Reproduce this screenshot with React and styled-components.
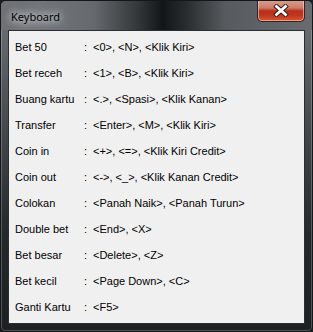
import React from "react";
import styled, { createGlobalStyle } from "styled-components";

const Global = createGlobalStyle`
  html, body { margin: 0; padding: 0; background: #1b1e20; }
  #root { width: 313px; height: 332px; }
`;

const Window = styled.div`
  box-sizing: border-box;
  width: 313px;
  height: 332px;
  border: 1px solid #14171a;
  border-radius: 6px 6px 5px 5px;
  background: linear-gradient(180deg, #72767a 0%, #5c6064 18%, #3e4245 45%, #25292b 70%, #1d2022 100%);
  box-shadow: inset 0 0 0 1px rgba(255, 255, 255, 0.22);
  display: flex;
  flex-direction: column;
  overflow: hidden;
`;

const TitleBar = styled.div`
  height: 29px;
  display: flex;
  align-items: flex-start;
  padding-left: 10px;
  background: linear-gradient(
    90deg,
    #6e7276 0%,
    #74787c 12%,
    #65696d 30%,
    #33373a 44%,
    #131618 52%,
    #2a2e31 60%,
    #575b5f 72%,
    #5f6367 85%,
    #686c70 100%
  );
`;

const Title = styled.span`
  font-family: "Noto Sans", "Open Sans", sans-serif;
  font-size: 11px;
  line-height: 15px;
  margin-top: 8px;
  color: #000;
  text-shadow: 0 0 6px rgba(235, 240, 245, 0.9), 0 0 10px rgba(235, 240, 245, 0.7),
    0 0 14px rgba(235, 240, 245, 0.5);
`;

const CloseButton = styled.div`
  box-sizing: border-box;
  margin-left: auto;
  margin-right: 7px;
  margin-top: -1px;
  width: 48px;
  height: 22px;
  border: 1px solid #3a1f1b;
  border-top: none;
  border-radius: 0 0 5px 5px;
  background: linear-gradient(
    180deg,
    #d9a092 0%,
    #cf7a68 38%,
    #b52f1c 52%,
    #bf351d 72%,
    #d8562f 100%
  );
  box-shadow: inset 0 0 0 1px rgba(255, 220, 210, 0.55);
  display: flex;
  align-items: center;
  justify-content: center;
`;

const Body = styled.div`
  flex: 1;
  display: flex;
  padding: 0 7px 7px 7px;
`;

const Client = styled.div`
  flex: 1;
  box-sizing: border-box;
  border: 1px solid #2a2e31;
  background: #f0f0f0;
  padding: 3px 6px 0 6px;
  display: grid;
  grid-template-columns: 69px 9px auto;
  grid-auto-rows: 26px;
  align-content: start;
  font-family: "Liberation Sans", Arial, sans-serif;
  font-size: 11px;
  color: #000;
`;

const Cell = styled.div`
  line-height: 26px;
  white-space: nowrap;
`;

const rows = [
  ["Bet 50", "<0>, <N>, <Klik Kiri>"],
  ["Bet receh", "<1>, <B>, <Klik Kiri>"],
  ["Buang kartu", "<.>, <Spasi>, <Klik Kanan>"],
  ["Transfer", "<Enter>, <M>, <Klik Kiri>"],
  ["Coin in", "<+>, <=>, <Klik Kiri Credit>"],
  ["Coin out", "<->, <_>, <Klik Kanan Credit>"],
  ["Colokan", "<Panah Naik>, <Panah Turun>"],
  ["Double bet", "<End>, <X>"],
  ["Bet besar", "<Delete>, <Z>"],
  ["Bet kecil", "<Page Down>, <C>"],
  ["Ganti Kartu", "<F5>"],
];

export default function App() {
  return (
    <>
      <Global />
      <Window>
        <TitleBar>
          <Title>Keyboard</Title>
          <CloseButton>
            <svg width="16" height="13" viewBox="0 0 16 13">
              <path d="M3.5 2.5 L12.5 10.5 M12.5 2.5 L3.5 10.5" stroke="#2b1a18" strokeWidth="4.6" strokeLinecap="square" />
              <path d="M3.5 2.5 L12.5 10.5 M12.5 2.5 L3.5 10.5" stroke="#ffffff" strokeWidth="2.8" strokeLinecap="square" />
            </svg>
          </CloseButton>
        </TitleBar>
        <Body>
          <Client>
            {rows.map(([label, value]) => (
              <React.Fragment key={label}>
                <Cell>{label}</Cell>
                <Cell>:</Cell>
                <Cell>{value}</Cell>
              </React.Fragment>
            ))}
          </Client>
        </Body>
      </Window>
    </>
  );
}
